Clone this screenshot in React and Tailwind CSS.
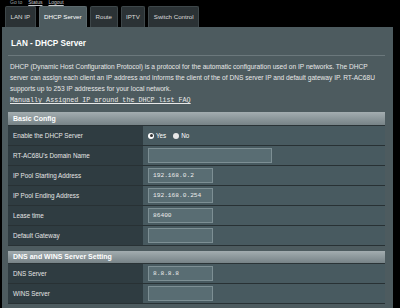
import React from "react";

const tabs = ["LAN IP", "DHCP Server", "Route", "IPTV", "Switch Control"];

const Header = ({ children, className = "" }) => (
  <div
    className={`flex items-center pl-[5px] bg-gradient-to-b from-[#a3adb0] to-[#778387] text-white font-bold text-[7px] border-b border-[#2a3336] ${className}`}
  >
    {children}
  </div>
);

const Row = ({ label, children }) => (
  <div className="flex h-[20px] border-b border-[#283134]">
    <div className="w-[135px] shrink-0 flex items-center pl-[5px] bg-[#2f3c41] text-[#e6e6e6] text-[6.3px]">
      {label}
    </div>
    <div className="flex-1 flex items-center pl-[5px] bg-[#485a60]">{children}</div>
  </div>
);

const Field = ({ value = "", wide }) => (
  <div
    className={`${wide ? "w-[124px]" : "w-[65px]"} h-[15px] flex items-center pl-[4px] bg-[#596d73] border border-[#7d8f94] text-[#ececec] text-[6.2px]`}
    style={{ fontFamily: '"Liberation Mono", monospace' }}
  >
    {value}
  </div>
);

export default function App() {
  return (
    <div
      className="w-[400px] h-[308px] bg-black overflow-hidden"
      style={{ fontFamily: '"Liberation Sans", Arial, sans-serif' }}
    >
      <div className="h-[6px] pl-[10px] flex gap-[6px] text-[5px] text-[#9aa0a3] leading-[5px]">
        <span>Go to</span>
        <span className="underline text-[#c5c9cb]">Status</span>
        <span className="underline text-[#c5c9cb]">Logout</span>
      </div>
      <div className="flex h-[21px] pl-[5px] gap-[3px]">
        {tabs.map((t) => (
          <div
            key={t}
            className={`flex items-center justify-center px-[4.5px] text-[6.2px] border-t border-x rounded-t-[2px] ${
              t === "DHCP Server"
                ? "bg-[#4d5b5f] border-[#5c696d] text-white"
                : "bg-[#2b3235] border-[#3e474a] text-[#dcdcdc]"
            }`}
          >
            {t}
          </div>
        ))}
      </div>
      <div className="ml-[2px] w-[391px] h-[300px] bg-[#4d5b5f] pl-[6px] pr-[8px]">
        <div className="h-[28px] pt-[6px] flex items-center pl-[3px] text-white font-bold text-[8.2px]">
          LAN - DHCP Server
        </div>
        <div className="h-[1px] bg-[#6b787c]" />
        <div className="pt-[6px] pl-[2px] text-[6.6px] leading-[10.8px] text-[#e8e8e8] whitespace-nowrap">
          <p>
            DHCP (Dynamic Host Configuration Protocol) is a protocol for the automatic configuration used on IP networks. The DHCP
            <br />
            server can assign each client an IP address and informs the client of the of DNS server IP and default gateway IP. RT-AC68U
            <br />
            supports up to 253 IP addresses for your local network.
          </p>
          <p
            className="underline text-[6.7px] leading-[10px] mt-[1px]"
            style={{ fontFamily: '"Liberation Mono", monospace' }}
          >
            Manually Assigned IP around the DHCP list FAQ
          </p>
        </div>
        <div className="mt-[7px]">
          <Header className="h-[14px]">Basic Config</Header>
          <Row label="Enable the DHCP Server">
            <div className="flex items-center gap-[2px] text-[6.3px] text-white">
              <span className="w-[6px] h-[6px] rounded-full bg-white flex items-center justify-center">
                <span className="w-[3px] h-[3px] rounded-full bg-[#333]" />
              </span>
              <span className="mr-[5px]">Yes</span>
              <span className="w-[6px] h-[6px] rounded-full bg-[#e8e8e8]" />
              <span>No</span>
            </div>
          </Row>
          <Row label="RT-AC68U's Domain Name">
            <Field wide />
          </Row>
          <Row label="IP Pool Starting Address">
            <Field value="192.168.0.2" />
          </Row>
          <Row label="IP Pool Ending Address">
            <Field value="192.168.0.254" />
          </Row>
          <Row label="Lease time">
            <Field value="86400" />
          </Row>
          <Row label="Default Gateway">
            <Field />
          </Row>
        </div>
        <div className="mt-[5px]">
          <Header className="h-[13px]">DNS and WINS Server Setting</Header>
          <Row label="DNS Server">
            <Field value="8.8.8.8" />
          </Row>
          <Row label="WINS Server">
            <Field />
          </Row>
        </div>
      </div>
    </div>
  );
}
